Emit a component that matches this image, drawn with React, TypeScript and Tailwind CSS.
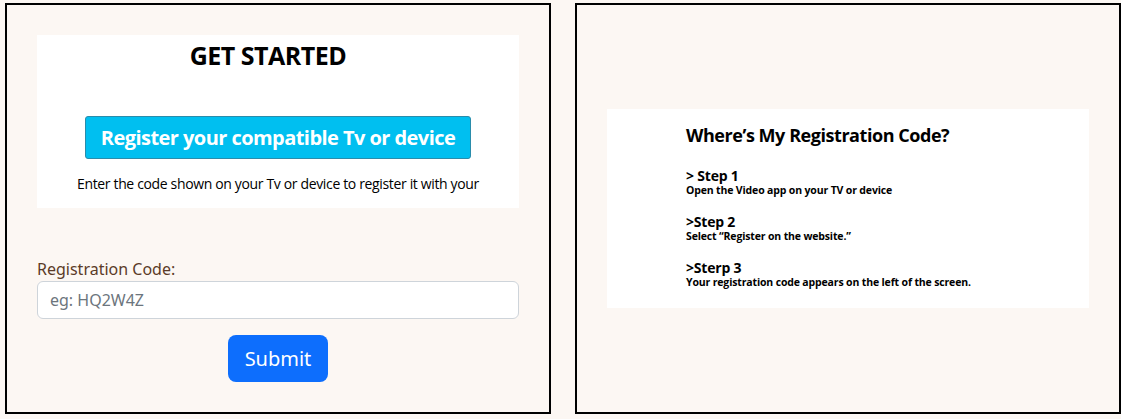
import React from "react";

export default function App() {
  return (
    <div className="w-[1121px] h-[419px] bg-[#fcf7f3] flex gap-[24px] pl-[5px] pt-[3px] font-['Open_Sans',sans-serif]">
      {/* Left panel */}
      <div className="w-[546px] h-[411px] border-2 border-black p-[30px] flex flex-col">
        <div className="bg-white h-[173px] flex flex-col items-center pt-[6px]">
          <h1 className="mr-[20px] text-[25px] leading-[29px] font-bold text-black tracking-[-0.5px]">GET STARTED</h1>
          <button className="mt-[46px] w-[386px] h-[43px] bg-[#00bff0] border border-[#2a8cab] rounded-[3px] text-white font-bold text-[20px] tracking-[-0.55px] leading-none flex items-center justify-center">
            Register your compatible Tv or device
          </button>
          <p className="mt-[16px] text-[14px] leading-[18px] text-black tracking-[-0.35px]">
            Enter the code shown on your Tv or device to register it with your
          </p>
        </div>
        <label className="mt-[49px] text-[16px] leading-[24px] text-[#5b3b28] font-['Noto_Sans',sans-serif]">
          Registration Code:
        </label>
        <input
          className="h-[38px] w-full bg-white border border-[#ced4da] rounded-[6px] px-[12px] text-[16px] font-['Noto_Sans',sans-serif] placeholder:text-[#6c757d] outline-none"
          placeholder="eg: HQ2W4Z"
        />
        <div className="flex justify-center mt-[16px]">
          <button className="w-[100px] h-[47px] bg-[#0d6efd] rounded-[8px] text-white text-[20px] font-['Noto_Sans',sans-serif]">
            Submit
          </button>
        </div>
      </div>

      {/* Right panel */}
      <div className="w-[546px] h-[411px] border-2 border-black p-[30px] flex items-center">
        <div className="bg-white w-full h-[199px] pl-[79px] pt-[15px] text-black font-bold">
          <h2 className="text-[18px] leading-[22px] tracking-[-0.45px]">Where’s My Registration Code?</h2>
          <div className="mt-[22px]">
            <div className="text-[14px] leading-[16px] tracking-[-0.2px]">&gt; Step 1</div>
            <div className="text-[10.5px] leading-[12px] tracking-[-0.15px]">Open the Video app on your TV or device</div>
          </div>
          <div className="mt-[18px]">
            <div className="text-[14px] leading-[16px] tracking-[-0.2px]">&gt;Step 2</div>
            <div className="text-[10.5px] leading-[12px] tracking-[-0.15px]">Select “Register on the website.”</div>
          </div>
          <div className="mt-[18px]">
            <div className="text-[14px] leading-[16px] tracking-[-0.2px]">&gt;Sterp 3</div>
            <div className="text-[10.5px] leading-[12px] tracking-[-0.15px]">Your registration code appears on the left of the screen.</div>
          </div>
        </div>
      </div>
    </div>
  );
}
